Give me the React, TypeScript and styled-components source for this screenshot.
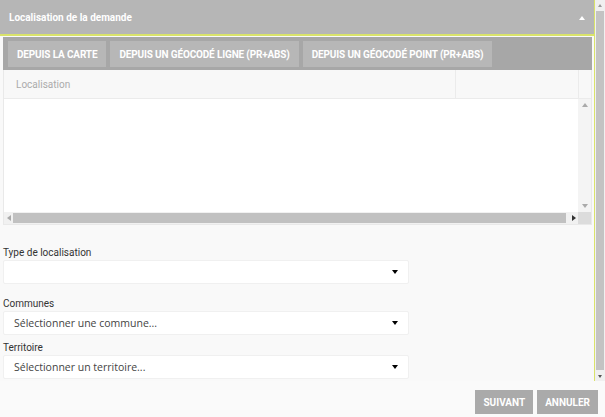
import React from "react";
import styled, { createGlobalStyle } from "styled-components";

const GlobalStyle = createGlobalStyle`
  html, body {
    margin: 0;
    padding: 0;
    background: #fafafa;
    font-family: Roboto, "Liberation Sans", Arial, sans-serif;
  }
  * { box-sizing: border-box; }
`;

const accent = "#d9e36a";

const Page = styled.div`
  width: 605px;
  height: 417px;
  display: flex;
  flex-direction: column;
  background: #fafafa;
  overflow: hidden;
`;

const ScrollArea = styled.div`
  height: 381px;
  display: flex;
`;

const Panel = styled.section`
  width: 595px;
  height: 100%;
  display: flex;
  flex-direction: column;
  border-right: 1px solid ${accent};
  overflow: hidden;
  background: #f9f9f9;
`;

const Header = styled.div`
  height: 36px;
  flex-shrink: 0;
  display: flex;
  align-items: center;
  justify-content: space-between;
  padding: 1px 9px 0 9px;
  background: #b6b6b6;
  border-bottom: 2px solid ${accent};
  color: #fff;
  font-weight: 700;
  font-size: 10px;
`;

const Caret = styled.span<{ $up?: boolean; $color?: string; $size?: number }>`
  width: 0;
  height: 0;
  border-left: ${(p) => (p.$size ?? 3)}px solid transparent;
  border-right: ${(p) => (p.$size ?? 3)}px solid transparent;
  ${(p) =>
    p.$up
      ? `border-bottom: ${(p.$size ?? 3) + 1}px solid ${p.$color ?? "#fff"};`
      : `border-top: ${(p.$size ?? 3) + 1}px solid ${p.$color ?? "#000"};`}
`;

const Body = styled.div`
  padding: 1px 2px 0 3px;
  display: flex;
  flex-direction: column;
`;

const Toolbar = styled.div`
  display: flex;
  gap: 4px;
  padding: 4px 5px 3px 5px;
  background: #a7a7a7;
`;

const ToolButton = styled.button`
  height: 26px;
  padding: 0 9px;
  border: none;
  background: #b7b7b7;
  color: #fff;
  font-family: Roboto, "Liberation Sans", sans-serif;
  font-weight: 700;
  font-size: 10px;
  letter-spacing: -0.15px;
  text-transform: uppercase;
  white-space: nowrap;
`;

const Grid = styled.div`
  border: 1px solid #e9e9e9;
  border-top: none;
  background: #fff;
  display: flex;
  flex-direction: column;
`;

const GridHead = styled.div`
  height: 29px;
  display: grid;
  grid-template-columns: 452px 123px 1fr;
  background: #f8f8f8;
  border-bottom: 1px solid #ebebeb;
`;

const HeadCell = styled.div`
  display: flex;
  align-items: center;
  padding-left: 12px;
  color: #ababab;
  font-size: 10px;
  border-right: 1px solid #ebebeb;
  &:last-child { border-right: none; }
`;

const GridBody = styled.div`
  height: 113px;
  display: flex;
`;

const GridContent = styled.div`
  flex: 1;
  background: #fff;
`;

const VScroll = styled.div`
  width: 13px;
  background: #f4f4f4;
  display: flex;
  flex-direction: column;
  justify-content: space-between;
  align-items: center;
  padding: 4px 0 4px;
`;

const HScroll = styled.div`
  height: 12px;
  display: flex;
  align-items: center;
  background: #f1f1f1;
`;

const HArrow = styled.div`
  width: 9px;
  display: flex;
  justify-content: center;
`;

const SideCaret = styled.span<{ $right?: boolean }>`
  width: 0;
  height: 0;
  border-top: 3px solid transparent;
  border-bottom: 3px solid transparent;
  ${(p) =>
    p.$right ? "border-left: 4px solid #333;" : "border-right: 4px solid #aaa;"}
`;

const HThumb = styled.div`
  flex: 1;
  height: 10px;
  background: #c1c1c1;
  margin-right: 3px;
`;

const Corner = styled.div`
  width: 13px;
  height: 12px;
  background: #dcdcdc;
`;

const Form = styled.div`
  padding: 22px 0 0 0;
  display: flex;
  flex-direction: column;
`;

const Field = styled.div<{ $gap: number }>`
  display: flex;
  flex-direction: column;
  margin-bottom: ${(p) => p.$gap}px;
`;

const Label = styled.label`
  font-size: 10px;
  color: #333;
  line-height: 12px;
  margin-bottom: 1px;
`;

const Select = styled.div`
  width: 406px;
  height: 24px;
  background: #fff;
  border: 1px solid #f0f0f0;
  border-radius: 2px;
  display: flex;
  align-items: center;
  justify-content: space-between;
  padding: 0 10px 0 10px;
  font-family: "Open Sans", Roboto, sans-serif;
  font-size: 10.5px;
  color: #444;
`;

const PageScroll = styled.div`
  width: 10px;
  height: 100%;
  background: #f0f0f0;
  display: flex;
  flex-direction: column;
  align-items: center;
`;

const ScrollArrow = styled.div`
  height: 10px;
  display: flex;
  align-items: center;
  justify-content: center;
`;

const ScrollThumb = styled.div`
  flex: 1;
  width: 8px;
  background: #c3c3c3;
  margin: 1px 0;
`;

const Footer = styled.div`
  flex: 1;
  display: flex;
  justify-content: flex-end;
  align-items: flex-start;
  gap: 4px;
  padding: 9px 7px 0 0;
`;

const ActionButton = styled.button`
  height: 24px;
  padding: 0 8px;
  border: none;
  background: #aaaaaa;
  color: #fff;
  font-family: Roboto, "Liberation Sans", sans-serif;
  font-weight: 700;
  font-size: 10px;
  text-transform: uppercase;
`;

export default function App() {
  return (
    <Page>
      <GlobalStyle />
      <ScrollArea>
        <Panel>
          <Header>
            <span>Localisation de la demande</span>
            <Caret $up $size={3} $color="#fff" />
          </Header>
          <Body>
            <Toolbar>
              <ToolButton>Depuis la carte</ToolButton>
              <ToolButton>Depuis un géocodé ligne (PR+ABS)</ToolButton>
              <ToolButton>Depuis un géocodé point (PR+ABS)</ToolButton>
            </Toolbar>
            <Grid>
              <GridHead>
                <HeadCell>Localisation</HeadCell>
                <HeadCell />
                <HeadCell />
              </GridHead>
              <GridBody>
                <GridContent />
                <VScroll>
                  <Caret $up $size={3} $color="#aaa" />
                  <Caret $size={3} $color="#aaa" />
                </VScroll>
              </GridBody>
              <HScroll>
                <HArrow>
                  <SideCaret />
                </HArrow>
                <HThumb />
                <HArrow>
                  <SideCaret $right />
                </HArrow>
                <Corner />
              </HScroll>
            </Grid>
            <Form>
              <Field $gap={14}>
                <Label>Type de localisation</Label>
                <Select>
                  <span />
                  <Caret $size={3} />
                </Select>
              </Field>
              <Field $gap={7}>
                <Label>Communes</Label>
                <Select>
                  <span>Sélectionner une commune...</span>
                  <Caret $size={3} />
                </Select>
              </Field>
              <Field $gap={0}>
                <Label>Territoire</Label>
                <Select>
                  <span>Sélectionner un territoire...</span>
                  <Caret $size={3} />
                </Select>
              </Field>
            </Form>
          </Body>
        </Panel>
        <PageScroll>
          <ScrollArrow>
            <Caret $up $size={2} $color="#999" />
          </ScrollArrow>
          <ScrollThumb />
          <ScrollArrow>
            <Caret $size={2} $color="#555" />
          </ScrollArrow>
        </PageScroll>
      </ScrollArea>
      <Footer>
        <ActionButton>Suivant</ActionButton>
        <ActionButton>Annuler</ActionButton>
      </Footer>
    </Page>
  );
}
